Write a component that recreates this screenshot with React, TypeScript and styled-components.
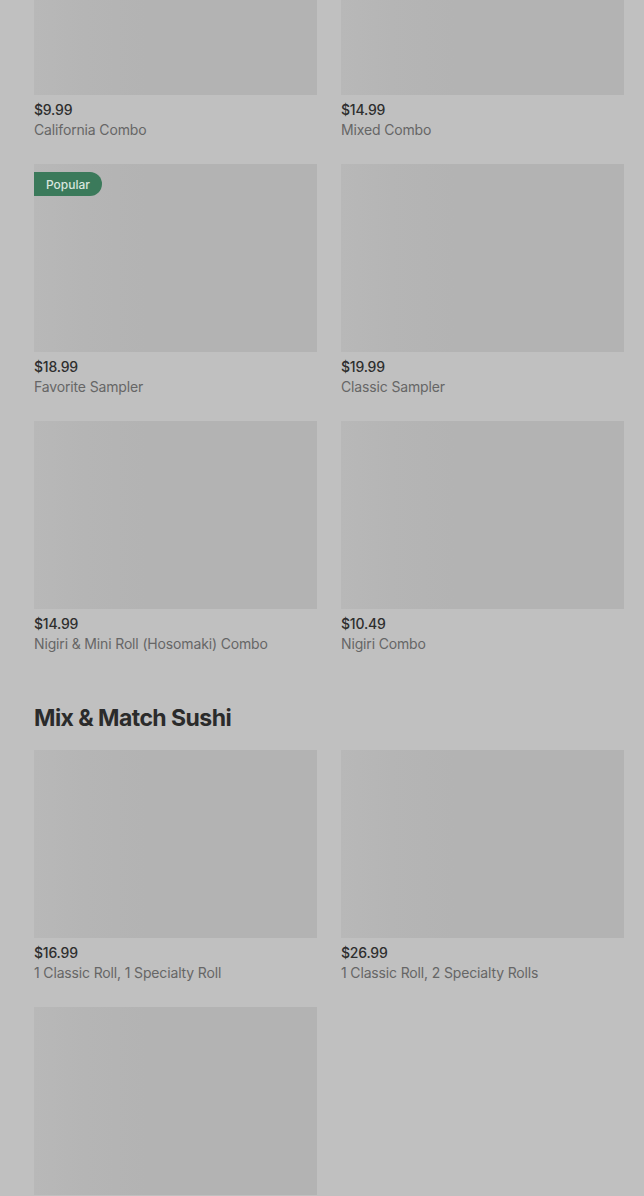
import React from "react";
import styled, { createGlobalStyle } from "styled-components";

const Global = createGlobalStyle`
  html, body { margin: 0; padding: 0; background: #c0c0c0; }
  body { font-family: Inter, "Noto Sans", "Liberation Sans", sans-serif; overflow: hidden; }
`;

const Page = styled.div`
  width: 644px;
  height: 1196px;
  overflow: hidden;
  background: #c0c0c0;
`;

const Scroller = styled.div`
  margin-top: -93px;
  padding: 0 20px 0 34px;
  display: flex;
  flex-direction: column;
`;

const Section = styled.section`
  display: flex;
  flex-direction: column;
`;

const Heading = styled.h2`
  margin: 48px 0 16px;
  font-size: 23px;
  line-height: 32px;
  font-weight: 700;
  letter-spacing: -0.55px;
  color: #2b2b2b;
`;

const Grid = styled.div`
  display: grid;
  grid-template-columns: 283px 283px;
  column-gap: 24px;
  row-gap: 24px;
`;

const Card = styled.div`
  display: flex;
  flex-direction: column;
`;

const Thumb = styled.div`
  position: relative;
  height: 188px;
  background: linear-gradient(90deg, #b8b8b8 0%, #b5b5b5 18%, #b3b3b3 40%, #b3b3b3 100%);
`;

const Badge = styled.span`
  position: absolute;
  left: 0;
  top: 8px;
  height: 24px;
  padding: 0 12px;
  display: flex;
  align-items: center;
  border-radius: 0 12px 12px 0;
  background: #3b7a5b;
  color: #d8e6de;
  font-size: 12px;
  font-weight: 500;
`;

const Price = styled.div`
  margin-top: 5px;
  font-size: 14px;
  line-height: 20px;
  font-weight: 500;
  color: #2e2e2e;
  letter-spacing: -0.2px;
`;

const Name = styled.div`
  font-size: 14px;
  line-height: 20px;
  color: #666666;
  letter-spacing: -0.15px;
`;

type Item = { price: string; name: string; popular?: boolean };

const combos: Item[] = [
  { price: "$9.99", name: "California Combo" },
  { price: "$14.99", name: "Mixed Combo" },
  { price: "$18.99", name: "Favorite Sampler", popular: true },
  { price: "$19.99", name: "Classic Sampler" },
  { price: "$14.99", name: "Nigiri & Mini Roll (Hosomaki) Combo" },
  { price: "$10.49", name: "Nigiri Combo" },
];

const mix: Item[] = [
  { price: "$16.99", name: "1 Classic Roll, 1 Specialty Roll" },
  { price: "$26.99", name: "1 Classic Roll, 2 Specialty Rolls" },
  { price: "", name: "" },
];

const ItemCard = ({ item }: { item: Item }) => (
  <Card>
    <Thumb>{item.popular && <Badge>Popular</Badge>}</Thumb>
    {item.price && <Price>{item.price}</Price>}
    {item.name && <Name>{item.name}</Name>}
  </Card>
);

export default function App() {
  return (
    <Page>
      <Global />
      <Scroller>
        <Section>
          <Grid>
            {combos.map((it, i) => (
              <ItemCard key={i} item={it} />
            ))}
          </Grid>
        </Section>
        <Section>
          <Heading>Mix &amp; Match Sushi</Heading>
          <Grid>
            {mix.map((it, i) => (
              <ItemCard key={i} item={it} />
            ))}
          </Grid>
        </Section>
      </Scroller>
    </Page>
  );
}
